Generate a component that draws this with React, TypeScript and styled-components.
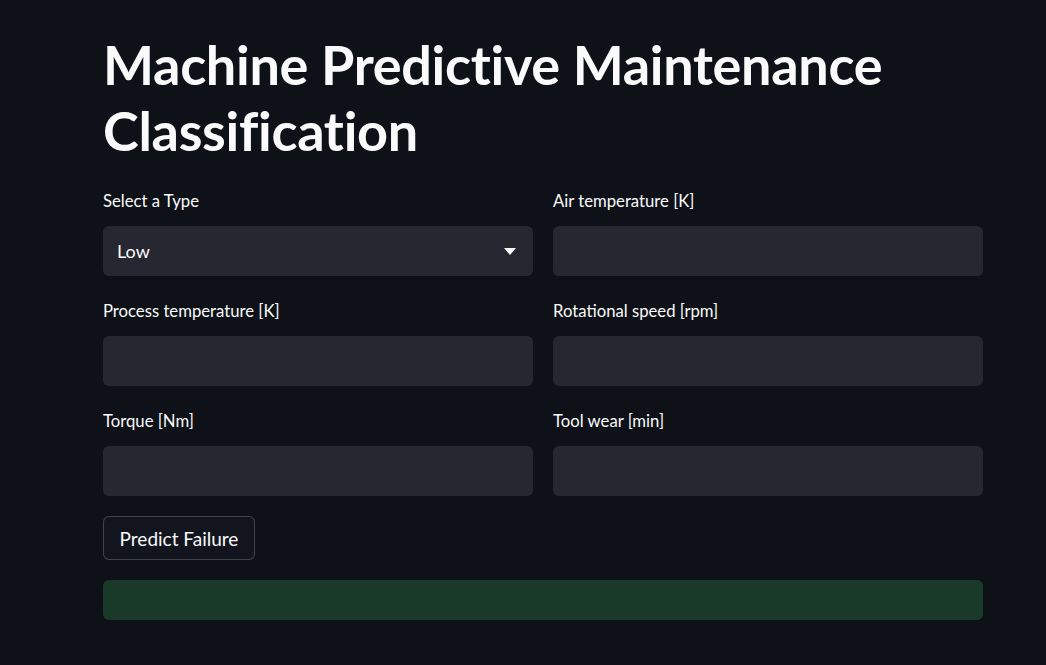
import React from "react";
import styled, { createGlobalStyle } from "styled-components";

const Global = createGlobalStyle`
  html, body { margin: 0; padding: 0; background: #0e1117; }
  body { font-family: Lato, "Noto Sans", sans-serif; color: #fafafa; }
  * { box-sizing: border-box; }
`;

const Page = styled.main`
  min-height: 665px;
  background: #0e1117;
  padding: 32px 0 0 103px;
`;

const Content = styled.div`
  width: 880px;
  display: flex;
  flex-direction: column;
  gap: 20px;
`;

const Title = styled.h1`
  margin: 0 0 6px 0;
  font-size: 54px;
  line-height: 66px;
  font-weight: 700;
  letter-spacing: -0.3px;
  color: #fafafa;
`;

const FormGrid = styled.div`
  display: grid;
  grid-template-columns: 1fr 1fr;
  column-gap: 20px;
  row-gap: 24px;
`;

const Field = styled.div`
  display: flex;
  flex-direction: column;
  gap: 14px;
`;

const Label = styled.label`
  font-size: 16.7px;
  line-height: 22px;
  height: 22px;
  color: #fafafa;
`;

const InputBox = styled.div`
  height: 50px;
  background: #262730;
  border-radius: 6px;
  display: flex;
  align-items: center;
  justify-content: space-between;
  padding: 0 17px 0 14px;
  font-size: 18px;
  color: #fafafa;
`;

const Button = styled.button`
  align-self: flex-start;
  height: 44px;
  width: 152px;
  background: #12151d;
  border: 1px solid rgba(250, 250, 250, 0.2);
  border-radius: 6px;
  color: #fafafa;
  font-family: Lato, "Noto Sans", sans-serif;
  font-size: 19px;
  padding: 0;
`;

const Alert = styled.div`
  height: 40px;
  background: #1a3a29;
  border-radius: 6px;
`;

const Caret = () => (
  <svg width="12" height="7" viewBox="0 0 12 7">
    <polygon points="0,0 12,0 6,7" fill="#fafafa" />
  </svg>
);

const fields: { label: string; select?: string }[] = [
  { label: "Select a Type", select: "Low" },
  { label: "Air temperature [K]" },
  { label: "Process temperature [K]" },
  { label: "Rotational speed [rpm]" },
  { label: "Torque [Nm]" },
  { label: "Tool wear [min]" },
];

export default function App() {
  return (
    <>
      <Global />
      <Page>
        <Content>
          <Title>
            Machine Predictive Maintenance
            <br />
            Classification
          </Title>
          <FormGrid>
            {fields.map((f) => (
              <Field key={f.label}>
                <Label>{f.label}</Label>
                <InputBox>
                  {f.select ? (
                    <>
                      <span>{f.select}</span>
                      <Caret />
                    </>
                  ) : null}
                </InputBox>
              </Field>
            ))}
          </FormGrid>
          <Button>Predict Failure</Button>
          <Alert />
        </Content>
      </Page>
    </>
  );
}
